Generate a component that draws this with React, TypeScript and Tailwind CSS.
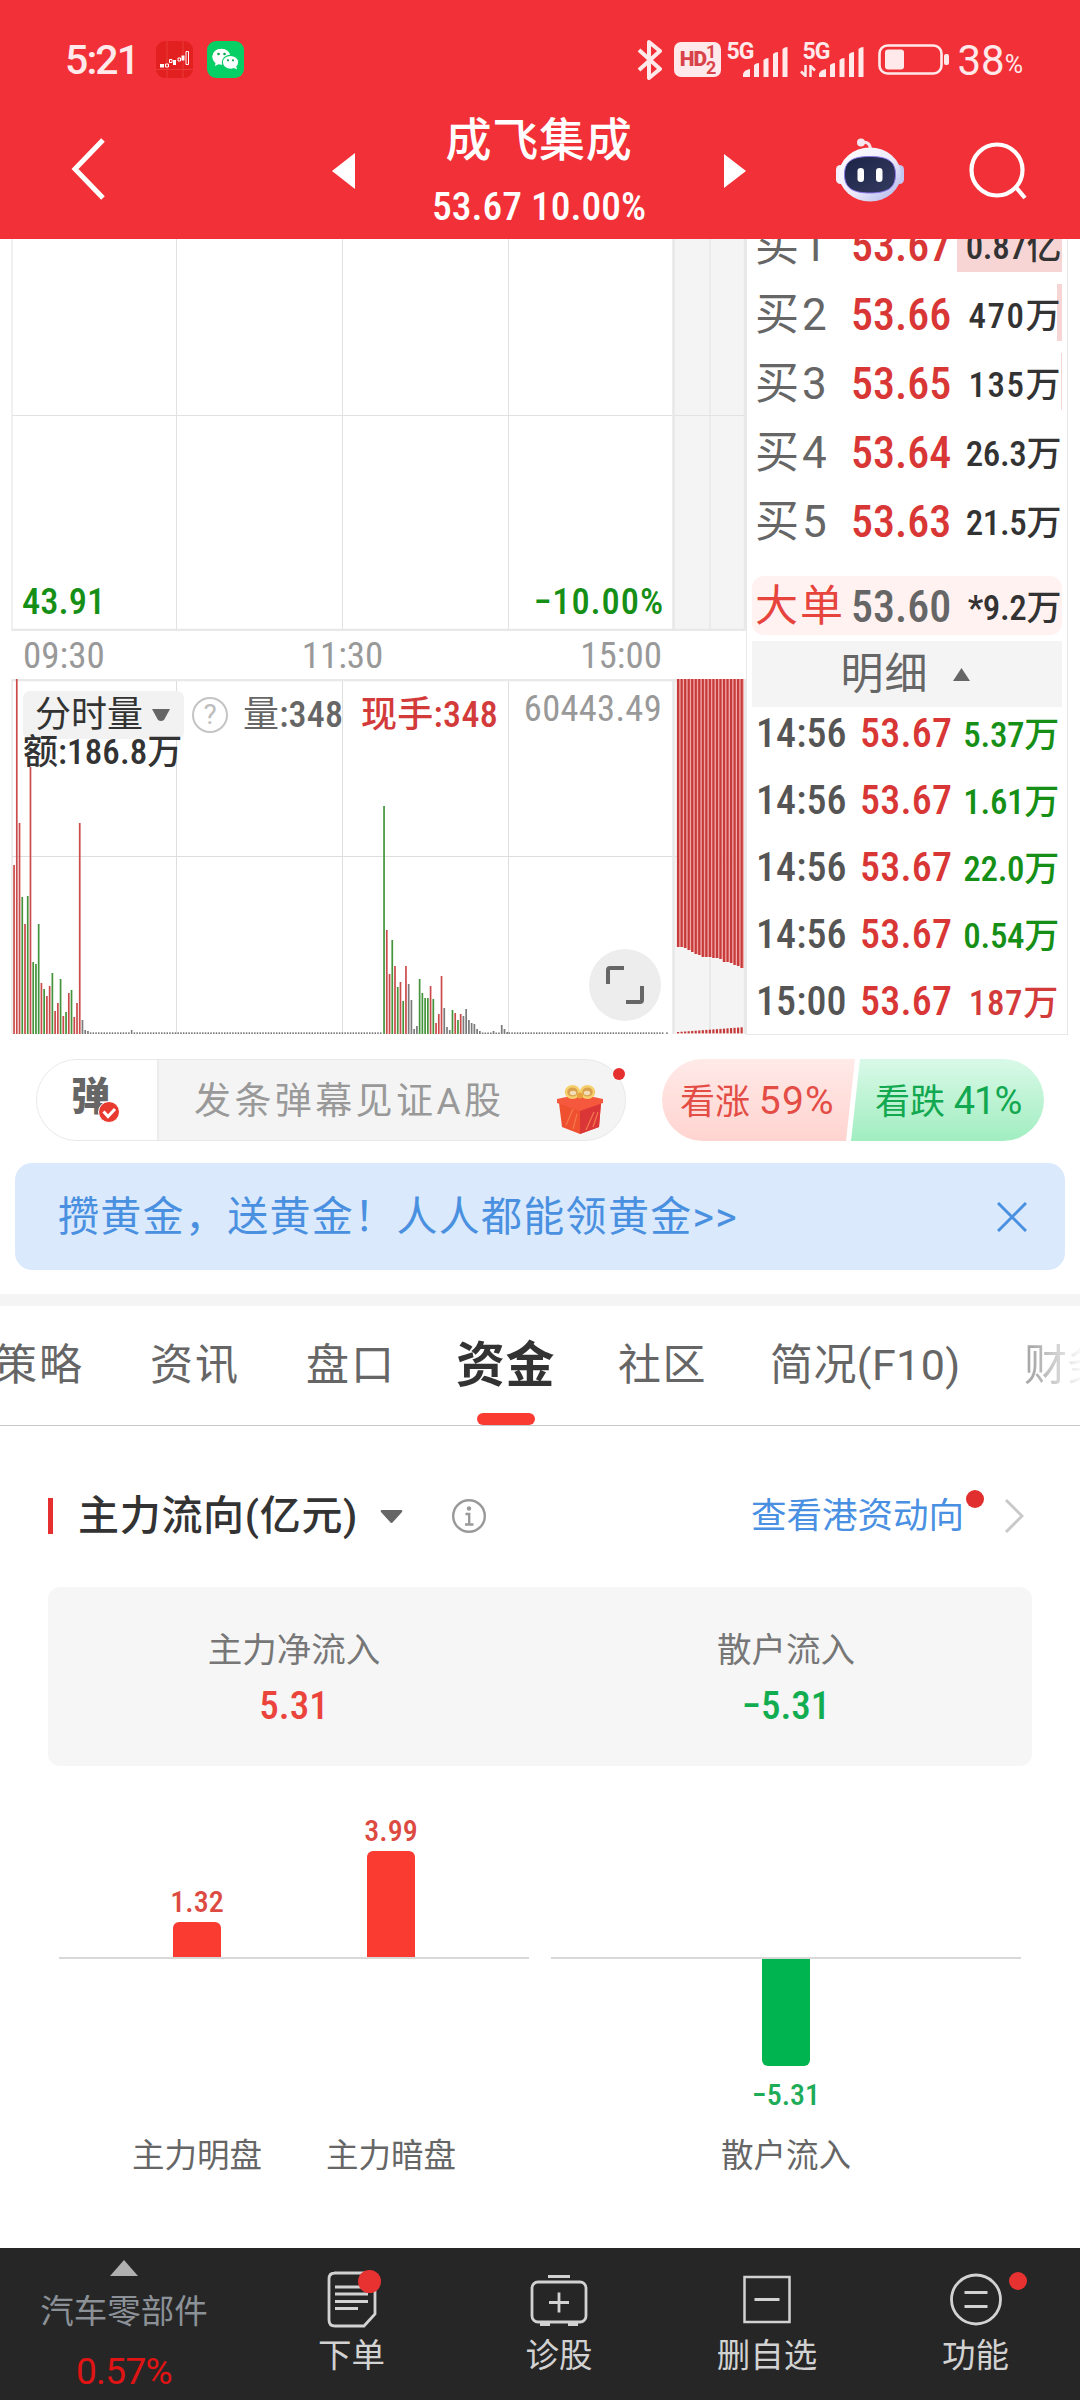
import { Fragment } from "react";
import clsx from "clsx";

type Tone = "r" | "g" | "k";

const toneFill: Record<Tone, string> = {
  r: "#cb4a4a",
  g: "#44943c",
  k: "#7b7b7b",
};

// [height, tone] per minute, starting at 09:30
const morning: [number, Tone][] = [
  [169, "r"], [355, "r"], [211, "r"], [137, "g"], [110, "r"], [138, "g"], [267, "r"],
  [72, "g"], [70, "g"], [110, "g"], [51, "r"], [45, "g"], [38, "r"], [48, "r"], [61, "g"],
  [23, "r"], [31, "r"], [55, "g"], [18, "r"], [22, "g"], [41, "r"], [44, "g"], [17, "r"],
  [31, "r"], [211, "r"], [14, "k"], [4, "k"], [3, "k"],
];

const afternoon: [number, Tone][] = [
  [228, "g"], [104, "r"], [60, "r"], [94, "g"], [68, "r"], [47, "g"], [52, "r"], [33, "g"],
  [68, "r"], [50, "k"], [34, "k"], [5, "k"], [8, "k"], [55, "g"], [41, "g"], [36, "g"],
  [36, "g"], [48, "r"], [35, "g"], [11, "r"], [20, "r"], [58, "r"], [26, "k"], [7, "k"],
  [4, "k"], [24, "g"], [21, "r"], [14, "g"], [20, "r"], [18, "k"], [25, "k"], [14, "k"],
  [11, "k"], [10, "k"], [5, "k"], [3, "k"], [1.5, "k"], [1.5, "k"], [1.5, "k"], [1.5, "k"],
  [3, "k"], [1.5, "k"], [1.5, "k"], [9, "k"], [5, "k"], [2, "k"],
];

const closing = [268, 268, 269, 271, 273, 275, 276, 278, 278, 278, 279, 279, 280, 283, 283, 284, 286, 287, 289];

const bids = [
  { label: "买1", price: "53.67", amount: "0.87亿" },
  { label: "买2", price: "53.66", amount: "470万" },
  { label: "买3", price: "53.65", amount: "135万" },
  { label: "买4", price: "53.64", amount: "26.3万" },
  { label: "买5", price: "53.63", amount: "21.5万" },
];

const trades = [
  { time: "14:56", amount: "5.37万", up: false },
  { time: "14:56", amount: "1.61万", up: false },
  { time: "14:56", amount: "22.0万", up: false },
  { time: "14:56", amount: "0.54万", up: false },
  { time: "15:00", amount: "187万", up: true },
];

function SignalBars() {
  return (
    <svg width="46" height="30" viewBox="0 0 46 30" fill="#ffe9ea">
      <path d="M0 30v-3q1-4 7-5v8z" />
      <path d="M11 30V18q2-2 5-2v14z" />
      <path d="M20.500 30V13q2-2 5-2v19z" />
      <path d="M30 30V7q2-2 5-2v25z" />
      <path d="M39.500 30V2q2-2 5-2v30z" />
    </svg>
  );
}

function StatusBar() {
  return (
    <div className="flex h-[119px] items-center pl-[65px] pr-[57px] text-[#ffe9ea]">
      <span className="mt-[2px] w-[91px] text-[41px] leading-none font-medium tracking-[-1.900px]">5:21</span>
      <svg width="37" height="37" viewBox="0 0 37 37">
        <rect width="37" height="37" rx="9" fill="#e2201f" />
        <path d="M11 0v37M27 0v37M0 28.500h37" stroke="#e93a39" strokeWidth="1" />
        <path d="M4 23h4v3.500H4zM17 19h3v5h-3zM25.500 14.500h3v5h-3z" fill="#fff" />
        <path d="M9.500 23h3v3h-3zM13.500 18.500h2.500v3h-2.500zM22 17h2.500v3H22zM30 10.500h2.500v13H30z" fill="none" stroke="#fff" />
      </svg>
      <svg className="ml-[14px]" width="37" height="37" viewBox="0 0 37 37">
        <rect width="37" height="37" rx="9" fill="#06cf65" />
        <path d="M14.500 8C9 8 5.500 11.500 5.500 16c0 2.500 1.200 4.500 3 6l-.5 3 3.500-1.700 3.500.4z" fill="#fff" />
        <ellipse cx="14.500" cy="15.500" rx="9" ry="7.700" fill="#fff" />
        <ellipse cx="23.500" cy="21.300" rx="8.200" ry="7" fill="#fff" stroke="#06cf65" strokeWidth="1.200" />
        <path d="m26 26.500 4 2-1-4z" fill="#fff" />
        <g fill="#06a552">
          <circle cx="11.500" cy="13" r="1.300" />
          <circle cx="17.500" cy="13" r="1.300" />
          <circle cx="21" cy="19.300" r="1.100" />
          <circle cx="26" cy="19.300" r="1.100" />
        </g>
      </svg>

      <svg className="ml-auto" width="26" height="40" viewBox="0 0 26 40" fill="none" stroke="#ffe9ea" strokeWidth="4" strokeLinejoin="round">
        <path d="m2 10 21 19-11 9V2l11 9L2 30" />
      </svg>
      <div className="ml-[11px] flex h-[35px] w-[47px] items-center justify-center rounded-[7px] bg-[#ffe9ea] font-bold text-[#d8434b]">
        <span className="text-[21px] leading-none font-black tracking-[-1px]">HD</span>
        <span className="flex flex-col text-[18px] leading-[16px]">
          <span>1</span>
          <span>2</span>
        </span>
      </div>
      <div className="relative ml-[22px] h-[33px] w-[46px]">
        <span className="absolute -left-[17px] -top-[3px] text-[23px] leading-none font-bold tracking-[-1px]">5G</span>
        <div className="pt-[4px]"><SignalBars /></div>
      </div>
      <div className="relative ml-[30px] h-[33px] w-[46px]">
        <span className="absolute -left-[17px] -top-[3px] text-[23px] leading-none font-bold tracking-[-1px]">5G</span>
        <svg className="absolute -left-[19px] top-[22px]" width="16" height="12" viewBox="0 0 16 12" fill="none" stroke="#ffe9ea" strokeWidth="2.500">
          <path d="M1 6.500 5.500 11V0M10.500 12V1l4.500 4.500" />
        </svg>
        <div className="pt-[4px]"><SignalBars /></div>
      </div>
      <svg className="ml-[13px]" width="72" height="32" viewBox="0 0 72 32">
        <rect x="1.500" y="1.500" width="62" height="28" rx="8" fill="none" stroke="#ffe9ea" strokeWidth="2.600" />
        <rect x="7" y="5.500" width="19" height="20" rx="3" fill="#ffe9ea" />
        <rect x="66" y="10" width="5" height="11" rx="2" fill="#ffe9ea" />
      </svg>
      <span className="mt-[2px] ml-[7px] text-[42px] leading-none">38</span>
      <span className="mt-[10px] text-[25px] leading-none">%</span>
    </div>
  );
}

function RobotIcon() {
  return (
    <svg width="68" height="66" viewBox="0 0 68 66">
      <defs>
        <linearGradient id="shell" x1="0" y1="0" x2="1" y2="1">
          <stop offset="0" stopColor="#ffffff" />
          <stop offset=".55" stopColor="#ece9fb" />
          <stop offset="1" stopColor="#a9b2e8" />
        </linearGradient>
        <linearGradient id="visor" x1="0" y1="0" x2="1" y2="1">
          <stop offset="0" stopColor="#1c2446" />
          <stop offset="1" stopColor="#343b60" />
        </linearGradient>
      </defs>
      <path d="M25 5.500q9-2 9.500 7" fill="none" stroke="#f7dfe8" strokeWidth="3" />
      <circle cx="25" cy="5.500" r="4" fill="#f6e6f2" />
      <rect x="0" y="28" width="9" height="19" rx="4.500" fill="#f3effc" />
      <rect x="59" y="28" width="9" height="19" rx="4.500" fill="#c3c6f0" />
      <ellipse cx="34" cy="37.500" rx="31" ry="27" fill="url(#shell)" />
      <path d="M34 19.500c18 0 25.500 5 25.500 18S52 56 34 56 8.500 50.500 8.500 37.500s7.500-18 25.500-18z" fill="url(#visor)" stroke="#8d78ea" strokeWidth="1" />
      <rect x="21.500" y="31" width="6.500" height="14" rx="3.200" fill="#fff" />
      <rect x="40" y="31" width="6.500" height="14" rx="3.200" fill="#fff" />
    </svg>
  );
}

function TitleBar() {
  return (
    <div className="flex h-[120px] items-start text-white">
      <svg className="ml-[70px] mt-[18px]" width="38" height="64" viewBox="0 0 38 64" fill="none" stroke="#fff" strokeWidth="5">
        <path d="M33 3 5 32l28 29" />
      </svg>
      <svg className="ml-[224px] mt-[34px]" width="23" height="36" viewBox="0 0 23 36" fill="#fff">
        <path d="M23 0v36L0 18z" />
      </svg>
      <div className="ml-[68px] flex w-[232px] flex-col items-center">
        <span className="text-[46px] leading-[42px] font-medium whitespace-nowrap tracking-[.8px]">成飞集成</span>
        <span className="mt-[25px] text-[39.500px] leading-[42px] font-medium whitespace-nowrap [font-stretch:75%]">
          53.67 10.00%
        </span>
      </div>
      <svg className="ml-[69px] mt-[35px]" width="22" height="34" viewBox="0 0 22 34" fill="#fff">
        <path d="M0 0v34l22-17z" />
      </svg>
      <div className="ml-[90px] mt-[18px]"><RobotIcon /></div>
      <svg className="ml-[65px] mt-[22px]" width="60" height="62" viewBox="0 0 60 62" fill="none" stroke="#fff" strokeWidth="4.200">
        <circle cx="28" cy="29" r="25.500" />
        <path d="m46 45 10 12" />
      </svg>
    </div>
  );
}

function PriceChart() {
  return (
    <div className="relative h-[392px]">
      <svg width="736" height="392" viewBox="11 239 736 392">
        <rect x="674" y="239" width="72" height="391" fill="#f4f4f4" />
        <path d="M12 239v392M176.500 239v391M342.500 239v391M508.500 239v391M710 239v391M12 415.500h734" stroke="#e2e2e2" />
        <path d="M12 630h734M673.500 239v391M745 239v391" stroke="#e8e8e8" strokeWidth="2.500" />
      </svg>
      <div className="absolute inset-x-[11px] bottom-[8px] flex justify-between pr-[71px] text-[36.500px] leading-[42px] font-medium text-[#168f16] [font-stretch:75%]">
        <span>43.91</span>
        <span className="tracking-[.9px]">−10.00%</span>
      </div>
    </div>
  );
}

function VolumeChart() {
  const x0 = 14;
  const step = 2.737;
  const flat = Array.from({ length: 107 }, (_, i) => x0 + (28 + i) * step);
  const tail = Array.from({ length: 57 }, (_, i) => x0 + (181 + i) * step);
  return (
    <div className="relative h-[356px]">
      <svg width="736" height="356" viewBox="11 679 736 356">
        <rect x="674" y="679" width="72" height="355" fill="#f4f4f4" />
        <path d="M12 679v355M176.500 679v355M342.500 679v355M508.500 679v355M710 679v355M12 856.500h734" stroke="#dedede" />
        <path d="M12 680h734M673.500 679v355M745 679v355" stroke="#e8e8e8" strokeWidth="2.500" />
        {morning.map(([h, tone], i) => (
          <rect key={i} x={x0 + i * step - 0.800} y={1034 - h} width="1.700" height={h} fill={toneFill[tone]} />
        ))}
        {afternoon.map(([h, tone], i) => (
          <rect key={i} x={384 + i * step - 0.800} y={1034 - h} width="1.700" height={h} fill={toneFill[tone]} />
        ))}
        {[...flat, ...tail, 667].map((x, i) => (
          <rect key={x} x={x - 0.800} y={i === 15 ? 1030 : 1032.300} width="1.500" height={i === 15 ? 4 : 1.700} fill="#777" />
        ))}
        {closing.map((h, i) => (
          <Fragment key={i}>
            <rect x={676.800 + i * 3.530} y="679" width="3.530" height={h} fill="#f0a0a0" />
            <rect x={677 + i * 3.530} y="679" width="2.200" height={h} fill="#c73a3a" />
            <rect x={677 + i * 3.530} y={1032 - i * 0.260} width="2.200" height={1.400 + i * 0.260} fill="#c73a3a" />
          </Fragment>
        ))}
      </svg>
      <div className="absolute left-[12px] top-[12px] flex w-[640px] items-center text-[36px] leading-[48px] font-medium [font-stretch:75%]">
        <div className="flex h-[48px] w-[161px] items-center justify-center gap-[9px] rounded-[7px] bg-[#f2f2f2] pr-[2px] text-[#333]">
          <span className="font-normal">分时量</span>
          <svg width="18" height="12" viewBox="0 0 18 12" fill="#666">
            <path d="M0 0h18l-6 11q-3 2-6 0z" />
          </svg>
        </div>
        <span className="ml-[8px] flex size-[36px] items-center justify-center rounded-full border-[2.500px] border-[#c4c4c4] text-[28px] leading-none font-normal text-[#bdbdbd] [font-stretch:100%]">
          ?
        </span>
        <span className="ml-[15px] w-[118px] text-[36px] tracking-[.2px] text-[#666]">
          <span className="font-normal">量</span>:348
        </span>
        <span className="w-[150px] text-[36px] tracking-[.3px] text-[#d33a3a]">现手:348</span>
      </div>
      <span className="absolute right-[84px] top-[9px] text-[36.500px] leading-[42px] tracking-[.3px] text-[#999] [font-stretch:75%]">60443.49</span>
      <span className="absolute left-[12px] top-[53px] text-[35px] leading-[42px] font-medium tracking-[.1px] text-[#333] [font-stretch:75%]">额:186.8万</span>
      <div className="absolute left-[578px] top-[270px] flex size-[72px] items-center justify-center rounded-full bg-[#ededed]">
        <svg width="38" height="38" viewBox="0 0 38 38" fill="none" stroke="#666" strokeWidth="4">
          <path d="M2 18V4q0-2 2-2h14M36 20v14q0 2-2 2H20" />
        </svg>
      </div>
    </div>
  );
}

function OrderBook() {
  return (
    <div className="h-[796px] w-[322px] border-r border-b border-l border-[#e8e8e8] pr-[5px] pl-[5px]">
      <div className="h-[337px] overflow-hidden">
        <div className="-mt-[29px]">
          {bids.map((b, i) => (
            <div key={b.label} className="relative flex h-[69px] items-center pl-[3px] leading-none">
              {i < 3 && (
                <div
                  className={clsx(
                    "absolute top-[5px] right-0 h-[57px] bg-[#f8d5d5]",
                    i === 0 && "w-[105px]",
                    i === 1 && "w-[5px]",
                    i === 2 && "w-px"
                  )}
                />
              )}
              <span className="relative mt-[2px] w-[96px] text-[44px] tracking-[3px] text-[#666]">{b.label}</span>
              <span className="relative mt-[2px] text-[44px] font-medium text-[#d93636] [font-stretch:75%]">{b.price}</span>
              <span
                className={clsx(
                  "relative mt-[6px] ml-auto text-[35px] font-medium text-[#333] [font-stretch:75%]",
                  b.amount.includes(".") ? "pr-[1px] tracking-[-.4px]" : "tracking-[1.500px]"
                )}
              >
                {b.amount}
              </span>
            </div>
          ))}
        </div>
      </div>
      <div className="flex h-[59px] items-center rounded-[12px] bg-[#fff2f1] pl-[3px] leading-none">
        <span className="mt-[1px] w-[96px] text-[43px] tracking-[2px] text-[#e6443c]">大单</span>
        <span className="mt-[2px] text-[44px] font-medium text-[#666] [font-stretch:75%]">53.60</span>
        <span className="mt-[6px] ml-auto pr-[1px] text-[35px] font-medium tracking-[-.4px] text-[#333] [font-stretch:75%]">*9.2万</span>
      </div>
      <div className="mt-[6px] flex h-[66px] items-center justify-center gap-[24px] bg-[#f4f4f4] pr-[4px] text-[43px] leading-none tracking-[1px] text-[#666]">
        明细
        <svg width="17" height="13" viewBox="0 0 17 13" fill="#666">
          <path d="M8.500 0 17 13H0z" />
        </svg>
      </div>
      <div className="-mt-[7px]">
        {trades.map((t, i) => (
          <div key={i} className="flex h-[67px] items-center pr-[3px] pl-[4px] leading-none font-medium [font-stretch:75%]">
            <span className="w-[104px] text-[40px] tracking-[.1px] text-[#555]">{t.time}</span>
            <span className="text-[40px] tracking-[.2px] text-[#d93636]">53.67</span>
            <span
              className={clsx(
                "mt-[4px] ml-auto text-[35px]",
                t.up ? "tracking-[.7px] text-[#d33a3a]" : "tracking-[-.3px] text-[#168f16]"
              )}
            >
              {t.amount}
            </span>
          </div>
        ))}
      </div>
    </div>
  );
}

function GiftIcon() {
  return (
    <svg width="46" height="50" viewBox="0 0 46 50">
      <path d="m2 19 21 7 21-7-2 24-19 7-18-7z" fill="#ee5030" />
      <path d="m23 26 21-7-2 24-19 7z" fill="#da3638" />
      <path d="M0 15 23 10l23 5v4l-23 8L0 19z" fill="#f5583c" />
      <path d="m9 41 7-16M16 45l4-15M29 46l8-18M36 43l5-15" stroke="#f5794c" strokeWidth="1.200" />
      <ellipse cx="15.500" cy="8" rx="6.500" ry="5.800" fill="#d9a04e" stroke="#f6cf6c" strokeWidth="2.600" />
      <ellipse cx="30.500" cy="8" rx="6.500" ry="5.800" fill="#d9a04e" stroke="#f6cf6c" strokeWidth="2.600" />
      <ellipse cx="16" cy="9" rx="3.200" ry="2.200" fill="#f3dcb8" />
      <ellipse cx="30" cy="9" rx="3.200" ry="2.200" fill="#f3dcb8" />
      <circle cx="23" cy="11.500" r="3" fill="#e8a13c" />
    </svg>
  );
}

function DanmakuBar() {
  return (
    <div className="mt-[24px] flex h-[82px] px-[36px]">
      <div className="relative flex w-[590px] rounded-full border border-[#e9e9e9] bg-[#f4f4f4]">
        <div className="relative w-[122px] rounded-l-full border-r-2 border-[#ececec] bg-white pt-[15px] pl-[34px] text-[39px] leading-[44px] font-black text-[#666]">
          弹
          <svg className="absolute top-[41px] left-[61px]" width="22" height="22" viewBox="0 0 22 22">
            <circle cx="11" cy="11" r="10.500" fill="#e93a30" stroke="#fff" />
            <path d="m5.500 10.500 4.500 5 7-7.500" fill="none" stroke="#fff" strokeWidth="3" />
          </svg>
        </div>
        <span className="ml-[35px] pt-[3px] text-[37px] leading-[78px] tracking-[3.400px] text-[#999]">发条弹幕见证A股</span>
        <div className="absolute top-[24px] left-[520px]"><GiftIcon /></div>
        <div className="absolute top-[8px] right-0 size-[12px] rounded-full bg-[#e5302f]" />
      </div>
      <div className="ml-[36px] flex text-[35px] leading-[82px]">
        <div className="w-[193px] rounded-l-full bg-linear-to-b from-[#ffeae8] to-[#ffd4d0] pt-px pl-[18px] whitespace-nowrap text-[#e34d45] [clip-path:polygon(0_0,100%_0,184px_100%,0_100%)]">
          看涨 <span className="text-[39px] tracking-[1.300px]">59%</span>
        </div>
        <div className="-ml-[4px] w-[193px] rounded-r-full bg-linear-to-b from-[#d9f9e8] to-[#a0edc0] pt-px pl-[24px] whitespace-nowrap text-[#12a850] [clip-path:polygon(9px_0,100%_0,100%_100%,0_100%)]">
          看跌 <span className="text-[38px] tracking-[-1px]">41%</span>
        </div>
      </div>
    </div>
  );
}

function Tabs() {
  return (
    <div className="relative flex h-[120px] items-center overflow-hidden border-b border-[#c8c8c8] text-[43px] leading-none whitespace-nowrap text-[#666] [&>span]:shrink-0">
      <span className="-ml-[6px] w-[156px] tracking-[2px]">策略</span>
      <span className="w-[156px] tracking-[2px]">资讯</span>
      <span className="w-[150px] tracking-[2px]">盘口</span>
      <span className="w-[162px] text-[49px] font-bold tracking-[.5px] text-[#333]">资金</span>
      <span className="w-[152px] tracking-[1.500px]">社区</span>
      <span className="w-[254px] tracking-[.4px]">简况(F10)</span>
      <span className="bg-linear-to-r from-[#aaa] from-10% to-white to-70% bg-clip-text text-transparent">财务</span>
      <div className="absolute bottom-0 left-[477px] h-[12px] w-[58px] rounded-full bg-[#fa3b32]" />
    </div>
  );
}

function FlowBar({ name, value, height }: { name: string; value: number; height: number }) {
  const up = value > 0;
  return (
    <div className="flex w-[194px] flex-col items-center">
      <div className="flex h-[191px] flex-col items-center justify-end">
        {up && (
          <>
            <span className="mb-[4px] text-[30px] leading-[32px] font-medium text-[#dc4a42] [font-stretch:75%]">{value}</span>
            <div className="w-[48px] rounded-t-[6px] bg-[#fa3b32]" style={{ height }} />
          </>
        )}
      </div>
      <div className="flex h-[165px] flex-col items-center pt-[2px]">
        {!up && (
          <>
            <div className="w-[48px] rounded-b-[6px] bg-[#00b550]" style={{ height }} />
            <span className="mt-[13px] text-[30px] leading-[32px] font-medium text-[#1fac58] [font-stretch:75%]">−{-value}</span>
          </>
        )}
      </div>
      <span className="mt-[14px] text-[32.500px] leading-[40px] text-[#666]">{name}</span>
    </div>
  );
}

function FundFlow() {
  return (
    <div className="h-[822px] px-[48px]">
      <div className="flex h-[180px] items-center">
        <div className="h-[36px] w-[5px] bg-[#e5302f]" />
        <span className="ml-[25px] text-[41px] leading-none font-medium whitespace-nowrap tracking-[.7px] text-[#333]">主力流向(亿元)</span>
        <svg className="ml-[22px]" width="23" height="13" viewBox="0 0 23 13" fill="#666">
          <path d="M2 0h19q2 0 1 2l-9 10q-1.500 2-3 0L1 2Q0 0 2 0" />
        </svg>
        <svg className="ml-[48px]" width="36" height="36" viewBox="0 0 36 36" fill="none" stroke="#999" strokeWidth="2.400">
          <circle cx="18" cy="18" r="15.800" />
          <circle cx="18" cy="10.500" r="2.200" fill="#999" stroke="none" />
          <path d="M14.500 16h3.700v10.500M14 26.500h8.500" />
        </svg>
        <div className="relative mt-[2px] ml-auto text-[35.500px] leading-none text-[#4a90e2]">
          查看港资动向
          <div className="absolute -top-[9px] -right-[20px] size-[18px] rounded-full bg-[#e02f2e]" />
        </div>
        <svg className="mr-[8px] ml-[40px]" width="20" height="36" viewBox="0 0 20 36" fill="none" stroke="#c9c9c9" strokeWidth="3">
          <path d="m2 2 16 16L2 34" />
        </svg>
      </div>

      <div className="-mt-[19px] grid h-[179px] grid-cols-2 rounded-[12px] bg-[#f6f6f6] pt-[42px] text-center">
        <div className="flex flex-col">
          <span className="text-[34.500px] leading-[42px] text-[#777]">主力净流入</span>
          <span className="mt-[14px] text-[39px] leading-[42px] font-medium text-[#ea443c] [font-stretch:75%]">5.31</span>
        </div>
        <div className="flex flex-col">
          <span className="text-[34.500px] leading-[42px] text-[#777]">散户流入</span>
          <span className="mt-[14px] text-[39px] leading-[42px] font-medium text-[#12ad50] [font-stretch:75%]">−5.31</span>
        </div>
      </div>

      <div className="relative grid grid-cols-2">
        <div className="absolute inset-x-[11px] top-[191px] flex h-[2px] gap-[22px]">
          <div className="flex-1 bg-[#d8d8d8]" />
          <div className="flex-1 bg-[#d8d8d8]" />
        </div>
        <div className="flex justify-center">
          <FlowBar name="主力明盘" value={1.320} height={35} />
          <FlowBar name="主力暗盘" value={3.990} height={106} />
        </div>
        <div className="flex justify-center">
          <FlowBar name="散户流入" value={-5.310} height={107} />
        </div>
      </div>
    </div>
  );
}

function BottomNav() {
  return (
    <div className="flex h-[152px] bg-[#262626] text-[33.500px] leading-[40px] text-[#d2d2d2]">
      <div className="flex w-[248px] flex-col items-center pt-[12px]">
        <svg width="28" height="16" viewBox="0 0 28 16" fill="#b0b0b0">
          <path d="m14 0 14 16H0z" />
        </svg>
        <span className="mt-[16px] text-[#8b9197]">汽车零部件</span>
        <span className="mt-[20px] text-[37px] tracking-[-.6px] text-[#e01414]">0.57%</span>
      </div>
      <div className="flex w-[207px] flex-col items-center pt-[22px]">
        <div className="relative h-[58px]">
          <svg width="50" height="58" viewBox="0 0 50 58" fill="none" stroke="#d2d2d2" strokeWidth="2.800">
            <path d="M7 3h35q6 0 6 6v35L37 56H8q-6 0-6-6V9q0-6 6-6" />
            <path d="M8 17h27M8 24h33M8 31.500h33M8 38.500h23" />
          </svg>
          <div className="absolute top-0 left-[31px] size-[23px] rounded-full bg-[#e83232]" />
        </div>
        <span className="mt-[8px]">下单</span>
      </div>
      <div className="flex w-[208px] flex-col items-center pt-[26px]">
        <svg width="58" height="54" viewBox="0 0 58 54" fill="none" stroke="#d2d2d2" strokeWidth="2.800">
          <rect x="2" y="8" width="54" height="40" rx="6" />
          <path d="M18 2.500h22M10 50.500h10M38 50.500h10M19 28.500h20M29 18.500v20" />
        </svg>
        <span className="mt-[8px]">诊股</span>
      </div>
      <div className="flex w-[208px] flex-col items-center pt-[26px]">
        <svg width="50" height="54" viewBox="0 0 50 54" fill="none" stroke="#d2d2d2" strokeWidth="2.500">
          <rect x="2.500" y="3" width="45" height="45" />
          <path d="M12.500 25.500h25" strokeWidth="3" />
        </svg>
        <span className="mt-[8px]">删自选</span>
      </div>
      <div className="flex w-[209px] flex-col items-center pt-[25px]">
        <div className="relative">
          <svg width="54" height="54" viewBox="0 0 54 54" fill="none" stroke="#d2d2d2" strokeWidth="2.800">
            <circle cx="27" cy="26.500" r="24.500" />
            <path d="M15.500 19.500h23M15.500 33.500h23" />
          </svg>
          <div className="absolute -top-[1px] left-[60px] size-[18px] rounded-full bg-[#e83232]" />
        </div>
        <span className="mt-[9px]">功能</span>
      </div>
    </div>
  );
}

export default function App() {
  return (
    <div className="flex h-[2400px] w-[1080px] flex-col overflow-hidden bg-white font-['Roboto','Noto_Sans_CJK_SC',sans-serif]">
      <div className="h-[239px] bg-[#f23037]">
        <StatusBar />
        <TitleBar />
      </div>

      <div className="flex pl-[11px]">
        <div className="w-[735px]">
          <PriceChart />
          <div className="flex h-[48px] items-center justify-between pr-[84px] pl-[12px] text-[37px] leading-none text-[#999] [font-stretch:75%]">
            <span>09:30</span>
            <span>11:30</span>
            <span>15:00</span>
          </div>
          <VolumeChart />
        </div>
        <OrderBook />
      </div>

      <DanmakuBar />

      <div className="mx-[15px] mt-[22px] flex h-[107px] items-center justify-between rounded-[17px] bg-[#dae9fc] pr-[38px] pl-[43px] text-[41px] leading-none text-[#4a90e0]">
        <span className="mt-[1px] tracking-[1.300px] whitespace-nowrap">攒黄金，送黄金！人人都能领黄金&gt;&gt;</span>
        <svg width="30" height="30" viewBox="0 0 30 30" fill="none" stroke="#4a90e0" strokeWidth="3">
          <path d="m1 1 28 28M29 1 1 29" />
        </svg>
      </div>

      <div className="mt-[24px] h-[12px] bg-[#f4f4f4]" />
      <Tabs />
      <FundFlow />
      <BottomNav />
    </div>
  );
}
